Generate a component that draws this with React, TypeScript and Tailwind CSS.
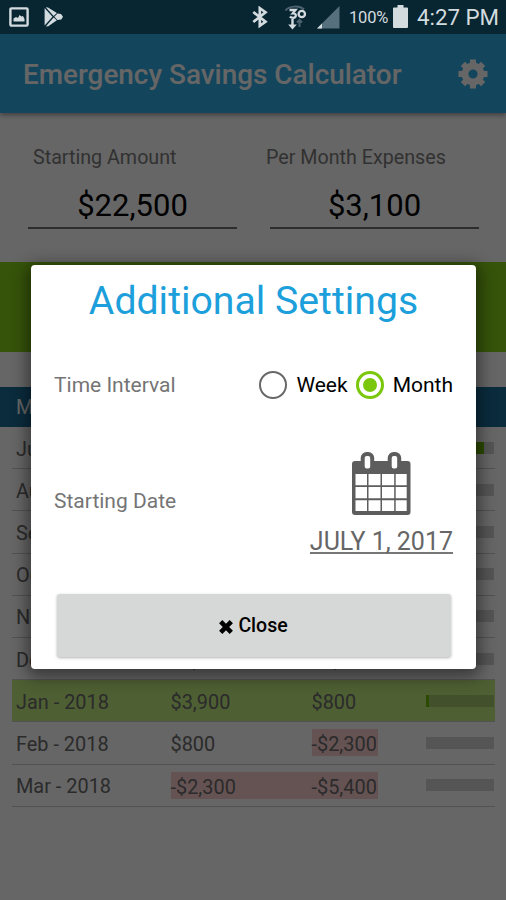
import React from 'react';

type Row = {
    month: string;
    start: string;
    end: string;
    fill: string;
    highlight?: boolean;
};

const rows: Row[] = [
    { month: 'Jul - 2017', start: '$22,500', end: '$19,400', fill: '86%' },
    { month: 'Aug - 2017', start: '$19,400', end: '$16,300', fill: '0%' },
    { month: 'Sep - 2017', start: '$16,300', end: '$13,200', fill: '0%' },
    { month: 'Oct - 2017', start: '$13,200', end: '$10,100', fill: '0%' },
    { month: 'Nov - 2017', start: '$10,100', end: '$7,000', fill: '0%' },
    { month: 'Dec - 2017', start: '$7,000', end: '$3,900', fill: '0%' },
    { month: 'Jan - 2018', start: '$3,900', end: '$800', fill: '4%', highlight: true },
    { month: 'Feb - 2018', start: '$800', end: '-$2,300', fill: '0%' },
    { month: 'Mar - 2018', start: '-$2,300', end: '-$5,400', fill: '0%' },
];

function StatusBar() {
    return (
        <div className="relative z-20 flex h-[34px] items-center bg-[#082532] text-[#d3dbdf]">
            {/* notifications */}
            <svg className="ml-[9px] h-[20px] w-[20px]" viewBox="0 0 20 20">
                <rect x="1.4" y="1.4" width="17.2" height="17.2" rx="1" fill="none" stroke="currentColor" strokeWidth="2.4" />
                <path d="M4.5 14.5v-3l2.500-1.500 2 1 1.500-3 2 1.500 1.500-.5 1.500 3v2.500z" fill="currentColor" />
            </svg>
            <svg className="ml-[15px] h-[20px] w-[20px]" viewBox="0 0 20 20" fill="currentColor">
                <path d="M.6 1 8.500 9.700.6 18.600z" />
                <path d="M1.800.2 4 .4l8.900 5.600-3.300 3zM1.800 19.600l7.800-9 3.300 2.600-8.600 6zM10.300 9.800l3.200-3.300 3.500.6 2 2.600-1.700 2.800-3.800.6z" />
            </svg>

            {/* radios */}
            <svg className="ml-[188px] h-[22px] w-[16px]" viewBox="0 0 16 22" fill="none" stroke="currentColor" strokeWidth="2.700">
                <path d="M1.300 6 13.500 15.800 7.800 19.800V2.200l5.700 4L1.300 16" />
            </svg>
            <svg className="ml-[16px] h-[25px] w-[24px]" viewBox="0 0 24 25" fill="none" stroke="currentColor">
                <path d="M1.500 5.500C5 .8 15.500.2 20 4.500" stroke="#4d6470" strokeWidth="2" />
                <path d="M5.500 5h6L8.800 8.300c4-.3 4 4.600.3 4.600-1.500 0-2.500-.6-3.200-1.400" strokeWidth="2.300" />
                <circle cx="17.800" cy="9" r="3.200" strokeWidth="2.300" />
                <path d="M15.500 22v-7.500M13 17.500l2.500-2.500 2.500 2.500" stroke="#4d6470" strokeWidth="2" />
                <path d="M8.500 14v8M6.800 20.700l1.700 2 1.700-2z" strokeWidth="2.400" />
            </svg>
            <svg className="ml-[9px] h-[23px] w-[23px]" viewBox="0 0 23 23">
                <path d="M22.500 0v22.500H0z" fill="#56707d" />
                <path d="M5 17.500v5H0z" fill="currentColor" />
            </svg>
            <span className="ml-[9px] w-[41px] pt-[2px] text-[16.500px] tracking-[-0.2px] whitespace-nowrap">100%</span>
            <svg className="ml-[3px] h-[24px] w-[15px]" viewBox="0 0 15 24" fill="currentColor">
                <path d="M4.500 0h6v2.500H14q1 0 1 1V22q0 1-1 1H1q-1 0-1-1V3.500q0-1 1-1h3.500z" />
            </svg>
            <span className="ml-[9px] pt-[2px] text-[22.300px] whitespace-nowrap">4:27 PM</span>
        </div>
    );
}

function GearIcon() {
    return (
        <svg className="mt-px ml-auto h-[30px] w-[30px]" viewBox="-15 -15 30 30" stroke="#fff">
            <circle r="8" fill="none" strokeWidth="6.800" />
            <path
                d="M0-9v-5.500M0 9v5.500M-9 0h-5.500M9 0h5.500M6.400-6.400l3.700-3.700M-6.400 6.400l-3.700 3.700M6.400 6.400l3.700 3.700M-6.400-6.400l-3.700-3.700"
                strokeWidth="6"
            />
        </svg>
    );
}

function AmountField({ label, value, className, fieldClassName }: { label: string; value: string; className: string; fieldClassName: string }) {
    return (
        <div className={className}>
            <div className="h-[30px] text-[19.700px] leading-[32px] whitespace-nowrap text-[#7c7c7c]">{label}</div>
            <div className={`mt-[12px] h-[45px] w-[209px] border-b-2 border-[#707070] text-center text-[31px] leading-[43px] text-black ${fieldClassName}`}>
                {value}
            </div>
        </div>
    );
}

function Amount({ value, wide }: { value: string; wide?: boolean }) {
    const negative = value.startsWith('-');
    return (
        <div className={wide ? 'w-[141px]' : 'w-[66px]'}>
            <div className={`h-[27px] pt-px leading-[29px] whitespace-nowrap ${negative ? 'bg-[#fdd0d0]' : ''}`}>{value}</div>
        </div>
    );
}

function TableRow({ row }: { row: Row }) {
    return (
        <div className={`mr-[11px] ml-[12px] flex h-[42.200px] items-center border-b border-[#cccccc] pl-[4px] text-[19.900px] text-[#6b6b6b] ${row.highlight ? 'bg-[#c3ee80]' : ''}`}>
            <div className="w-[154.500px] pt-[4px] whitespace-nowrap">{row.month}</div>
            <Amount value={row.start} wide />
            <Amount value={row.end} />
            <div className={`ml-[48.500px] h-[12px] w-[68px] ${row.highlight ? 'bg-[#a5c86c]' : 'bg-[#d5d5d5]'}`}>
                <div className="h-full bg-[#6eb800]" style={{ width: row.fill }} />
            </div>
        </div>
    );
}

function CalendarIcon() {
    return (
        <svg className="h-[65px] w-[60px]" viewBox="0 0 60 65">
            <rect x="1" y="10" width="58.500" height="54" rx="3" fill="#5d5d5d" />
            <g fill="#fff">
                <path d="M4.500 23H16v11.300H4.500zM17.500 23h12v11.300h-12zM31 23h12.200v11.300H31zM44.700 23h11v11.300h-11z" />
                <path d="M4.500 36H16v11.300H4.500zM17.500 36h12v11.300h-12zM31 36h12.200v11.300H31zM44.700 36h11v11.300h-11z" />
                <path d="M4.500 49.300H16V60H4.500zM17.500 49.300h12V60h-12zM31 49.300h12.200V60H31zM44.700 49.300h11V60h-11z" />
            </g>
            <g fill="#fff" stroke="#5d5d5d" strokeWidth="4">
                <rect x="11.700" y="3" width="9.500" height="16.500" rx="4" />
                <rect x="38.700" y="3" width="9.500" height="16.500" rx="4" />
            </g>
        </svg>
    );
}

function SettingsDialog() {
    return (
        <div className="flex h-[404px] w-[445px] flex-col rounded-[4px] bg-white shadow-[0_4px_16px_4px_rgba(0,0,0,0.45)]">
            <h2 className="mt-[10px] h-[52px] text-center text-[39.200px] leading-[52px] text-[#1c9fdb]">Additional Settings</h2>

            <div className="mt-[43px] flex h-[30px] items-center px-[23px] text-[21px]">
                <span className="pt-[2px] text-[#757575]">Time Interval</span>
                <div className="ml-auto flex items-center text-black">
                    <span className="h-[28px] w-[28px] rounded-full border-[2.500px] border-[#686868]" />
                    <span className="ml-[9px] pt-[2px]">Week</span>
                    <span className="ml-[8px] flex h-[28px] w-[28px] items-center justify-center rounded-full border-[3px] border-[#7ac70c]">
                        <span className="h-[14px] w-[14px] rounded-full bg-[#7ac70c]" />
                    </span>
                    <span className="ml-[9px] pt-[2px]">Month</span>
                </div>
            </div>

            <div className="mt-[51px] flex h-[104px] px-[23px]">
                <span className="mt-[35px] text-[21px] leading-[30px] text-[#757575]">Starting Date</span>
                <div className="ml-auto flex flex-col items-end">
                    <div className="mr-[42px]">
                        <CalendarIcon />
                    </div>
                    <div className="mt-[8px] h-[30px] border-b-2 border-[#777777] text-[25px] leading-[35px] whitespace-nowrap text-[#666666]">JULY 1, 2017</div>
                </div>
            </div>

            <button className="mx-auto mt-[39px] flex h-[63px] w-[394px] items-center justify-center rounded-[3px] bg-[#d6d8d7] text-[19.500px] font-medium text-black shadow-[0_1px_3px_rgba(0,0,0,0.3)]">
                <svg className="mt-[3px] mr-[5px] h-[14px] w-[14px]" viewBox="0 0 14 14" stroke="currentColor" strokeWidth="4.600">
                    <path d="m1.700 1.700 10.600 10.600M12.300 1.700 1.700 12.300" />
                </svg>
                Close
            </button>
        </div>
    );
}

export default function App() {
    return (
        <div className="relative h-[900px] w-[506px] overflow-hidden bg-white font-[Roboto,sans-serif]">
            <StatusBar />

            <header className="relative flex h-[79px] items-center bg-[#31ade6] pr-[18px] pl-[23px] shadow-[0_2px_5px_rgba(0,0,0,0.4)]">
                <h1 className="pt-[3px] text-[27.900px] font-medium whitespace-nowrap text-white">Emergency Savings Calculator</h1>
                <GearIcon />
            </header>

            <section className="flex h-[149px] pt-[29px]">
                <AmountField className="ml-[33px] w-[233px]" fieldClassName="-ml-[5px]" label="Starting Amount" value="$22,500" />
                <AmountField className="w-[213px]" fieldClassName="ml-[4px]" label="Per Month Expenses" value="$3,100" />
            </section>

            <div className="h-[90px] bg-[#88d119]" />

            <div className="mt-[35px] flex h-[40px] items-center bg-[#1a6e98] pl-[16px] text-[20px] text-white">
                <div className="w-[155px]">Month</div>
                <div className="w-[141px]">Start</div>
                <div>End</div>
            </div>
            {rows.map((row) => (
                <TableRow key={row.month} row={row} />
            ))}

            {/* scrim and dialog */}
            <div className="absolute inset-0 z-10 flex items-start bg-black/60 pt-[265px] pl-[31px]">
                <SettingsDialog />
            </div>
        </div>
    );
}
